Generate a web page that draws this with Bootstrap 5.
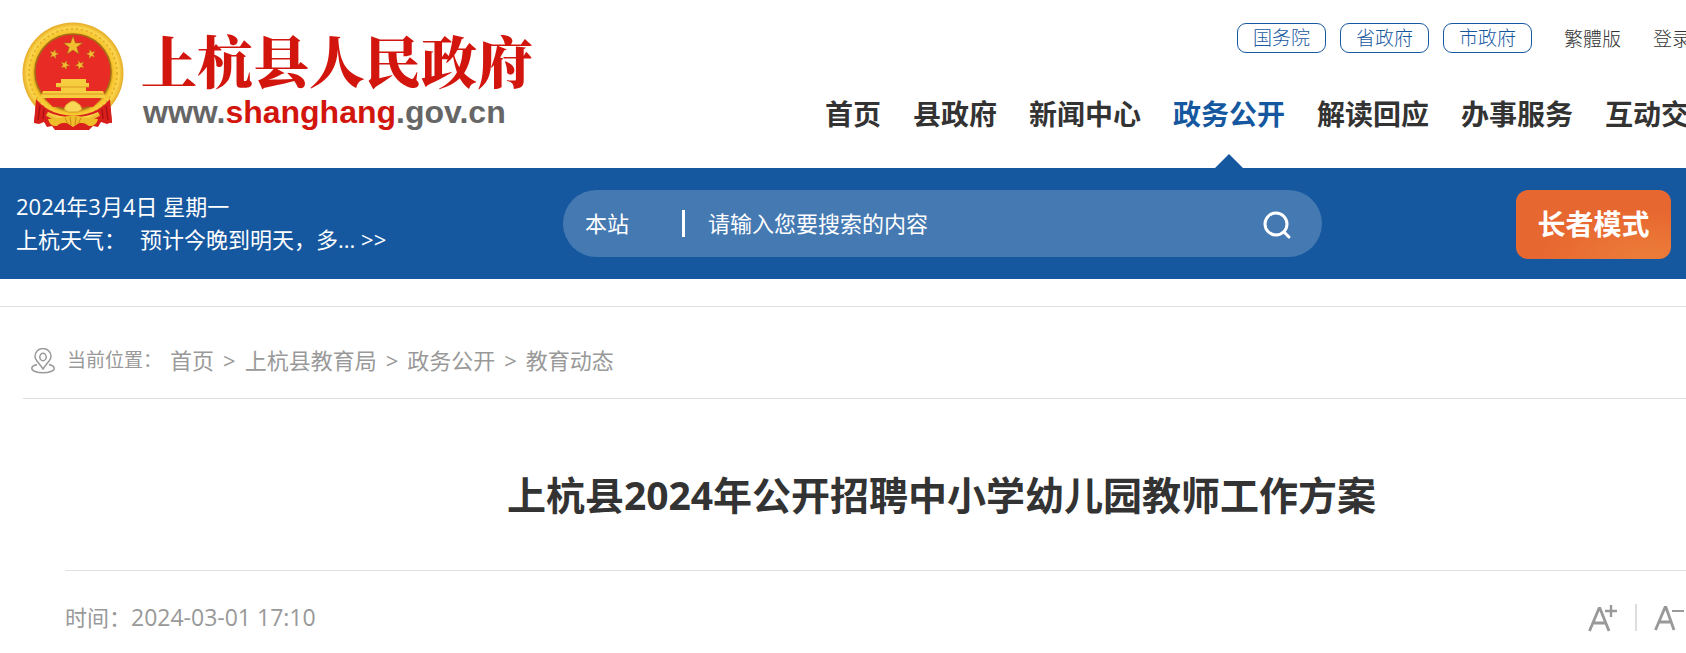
<!DOCTYPE html>
<html lang="zh-CN">
<head>
<meta charset="utf-8">
<meta name="viewport" content="width=device-width, initial-scale=1">
<title>上杭县2024年公开招聘中小学幼儿园教师工作方案</title>
<link href="https://cdn.jsdelivr.net/npm/bootstrap@5.3.0/dist/css/bootstrap.min.css" rel="stylesheet">
<style>
:root { --gov-blue: #16589f; --ink: #333; --muted: #999; --rule: #e0e0e0; }
body { font-family: "Open Sans", "Noto Sans CJK SC", sans-serif; font-size: 22px; line-height: 33px; color: var(--ink); overflow-x: hidden; background: #fff; }
a { text-decoration: none; color: inherit; }
/* the site is laid out a little wider than the window */
.canvas { width: calc(100% + 197px); }

.site-head { height: 168px; padding: 22px 166px 0 22px; }
.emblem { width: 102px; height: 109px; }
.brand-text { margin-left: 17px; }
.brand-name { font-family: "Noto Serif CJK SC", "Noto Sans CJK SC", serif; font-weight: 900; font-size: 56px; line-height: 74px; color: #d2150d; }
.brand-url { font-family: "Liberation Sans", sans-serif; font-weight: 700; font-size: 32px; line-height: 32px; color: #666; padding-left: 2px; }
.brand-url span { color: #d2150d; }

.top-links { font-size: 19px; line-height: 28px; font-weight: 300; padding-right: 26px; gap: 14px; margin-top: 1px; }
.pill { border: 1px solid var(--gov-blue); border-radius: 9px; color: var(--gov-blue); padding: 0 15px; }
.plain-link { margin-left: 18px; padding-top: 1px; }
.main-nav { gap: 32px; font-size: 28px; font-weight: 700; line-height: 42px; margin-top: 40px; }
.main-nav a { position: relative; height: 75px; }
.main-nav .current { color: var(--gov-blue); }
.main-nav .current::after { content: ""; position: absolute; left: 50%; bottom: 0; margin-left: -14px; border: 14px solid transparent; border-top: 0; border-bottom-color: var(--gov-blue); }

.blue-bar { background: var(--gov-blue); color: #fff; }
.bar-grid { display: grid; grid-template-columns: 1fr 759px 1fr; height: 111px; padding: 22px 12px 0 14px; }
.today { padding-left: 2px; }
.weather { gap: 14px; }
.search-box { height: 67px; border-radius: 34px; background: rgba(255,255,255,.2); padding: 0 28px 0 22px; }
.search-box select, .search-box input { background: none; border: 0; color: #fff; outline: 0; appearance: none; padding: 0; }
.search-box select { width: 97px; }
.divider { width: 3px; height: 27px; background: #fff; margin-right: 23px; }
.search-box input::placeholder { color: #fff; opacity: 1; }
.icon-btn { border: 0; background: none; padding: 0; color: inherit; line-height: 0; }
.mode-btn { height: 69px; border: 0; border-radius: 12px; color: #fff; font-size: 28px; font-weight: 700; }
.elder { width: 155px; background: radial-gradient(ellipse 110px 50px at 85% 100%, #ec7d3a, #e76730); padding: 0; }
.access { width: 184px; background: #4669b8; }

.rule { border-bottom: 1px solid var(--rule); }
.bar-gap { height: 28px; }
.crumbs { margin-left: 23px; height: 92px; padding: 16px 0 0 8px; color: var(--muted); border-bottom: 1px solid #dcdcdc; }
.crumb-label { font-size: 19px; margin: 0 8px 0 12px; }
.crumb-list { gap: 9px; }
.article { margin: 0 65px; }
.article h1 { font-size: 39px; line-height: 58px; font-weight: 700; padding: 67px 0 46px; margin: 0; }
.meta { color: var(--muted); padding: 30px 0 0; }
.meta time { font-size: 23px; }
.tools { padding-right: 134px; gap: 17px; }
.tool-bar { width: 2px; height: 27px; background: #ddd; }
</style>
</head>
<body>
<header class="site-head canvas d-flex justify-content-between">
  <a href="#" class="d-flex">
    <svg class="emblem" viewBox="0 0 102 109" role="img" aria-label="国徽">
      <defs>
        <radialGradient id="gold" cx=".5" cy=".5" r=".5"><stop offset=".74" stop-color="#c98a18"/><stop offset=".8" stop-color="#f6c62c"/><stop offset=".91" stop-color="#fbd44c"/><stop offset="1" stop-color="#e5ab25"/></radialGradient>
        <polygon id="star" points="0,-10 2.4,-3.1 9.5,-3.1 3.8,1.3 5.9,8.1 0,4 -5.9,8.1 -3.8,1.3 -9.5,-3.1 -2.4,-3.1"/>
      </defs>
      <path d="M15 74 12 101l5 1 5-2 3 5 5-1 3 4h34l4-4 5 1 3-5 6 2 5-2-3-26z" fill="#d91f1b"/>
      <circle cx="51" cy="51" r="50.500" fill="url(#gold)"/>
      <circle cx="51" cy="51" r="44" fill="none" stroke="#e0a829" stroke-width="1.5" stroke-dasharray="2 3"/>
      <circle cx="51" cy="50" r="38" fill="#e92b25" stroke="#a66b16" stroke-width="1.5"/>
      <g fill="#f3bd32" stroke="#9d6415" stroke-width=".6">
        <use href="#star" transform="translate(51 24)"/>
        <use href="#star" transform="translate(32 32) scale(.5) rotate(15)"/>
        <use href="#star" transform="translate(69 32) scale(.5) rotate(-15)"/>
        <use href="#star" transform="translate(43 43) scale(.5) rotate(20)"/>
        <use href="#star" transform="translate(58 43) scale(.5) rotate(-20)"/>
      </g>
      <path d="M39 57h25v4h3v4h-3v4h17l3 7H18l3-7h18v-4h-5v-4h5z" fill="#f7cd40"/>
      <path d="M36 65h31M20 72h62" stroke="#dc9925"/>
      <path d="M23 77h56l-8 8-10-1-6-4h-8l-6 4-10 1z" fill="#e32822"/>
      <path d="M14 77q10 12 24 15 13 3 26 0 14-3 24-15l2 24-8-1-6-10q-10 5-25 5t-25-5l-6 10-8 1z" fill="#d91f1b"/>
      <path d="M18 84l-2 14M22 87l-1 10M84 84l2 14M80 87l1 10" stroke="#a80f12" stroke-width="1.3"/>
      <path d="M42 87l2-4 4-3 3-1 3 1 4 3 2 4-4 3H46z" fill="#f9d756" stroke="#dba02a"/>
      <path d="M26 97q13-1 20-3l5-1 5 1q7 2 20 3-2 8-9 7-5-4-10-3l-6 4-6-4q-6-1-10 3-7 1-9-7z" fill="#f0bd2a"/>
      <path d="M43 96l3 6M48 95l1 8M54 95l-1 8M59 96l-3 6" stroke="#c98718"/>
    </svg>
    <div class="brand-text">
      <div class="brand-name">上杭县人民政府</div>
      <div class="brand-url">www.<span>shanghang</span>.gov.cn</div>
    </div>
  </a>
  <div class="flex-shrink-0">
    <div class="top-links d-flex justify-content-end align-items-center">
      <a class="pill" href="#">国务院</a>
      <a class="pill" href="#">省政府</a>
      <a class="pill" href="#">市政府</a>
      <a class="plain-link" href="#" lang="zh-TW">繁體版</a>
      <a class="plain-link" href="#">登录</a>
    </div>
    <nav class="main-nav d-flex">
      <a href="#">首页</a>
      <a href="#">县政府</a>
      <a href="#">新闻中心</a>
      <a class="current" href="#" aria-current="page">政务公开</a>
      <a href="#">解读回应</a>
      <a href="#">办事服务</a>
      <a href="#">互动交流</a>
    </nav>
  </div>
</header>

<section class="blue-bar canvas">
  <div class="bar-grid">
    <div class="today">
      <div>2024年3月4日 星期一</div>
      <div class="weather d-flex"><span>上杭天气：</span><a href="#">预计今晚到明天，多... &gt;&gt;</a></div>
    </div>
    <form class="search-box d-flex align-items-center">
      <select aria-label="搜索范围"><option>本站</option></select>
      <span class="divider"></span>
      <input class="flex-grow-1" type="text" placeholder="请输入您要搜索的内容" aria-label="搜索内容">
      <button class="icon-btn" type="button" aria-label="搜索">
        <svg width="32" height="32" viewBox="0 0 32 32" fill="none" stroke="#fff" stroke-width="3" stroke-linecap="round"><circle cx="14" cy="16" r="11"/><path d="M22 24l5 5"/></svg>
      </button>
    </form>
    <div class="d-flex justify-content-end">
      <button class="mode-btn elder me-3" type="button">长者模式</button>
      <button class="mode-btn access" type="button" aria-label="无障碍"></button>
    </div>
  </div>
</section>
<div class="rule bar-gap"></div>

<main class="canvas">
  <nav class="crumbs d-flex align-items-center" aria-label="当前位置">
    <svg width="24" height="26" viewBox="0 0 24 26" fill="none" stroke="#999" stroke-width="1.5"><path d="M12 21C8 15 4 12 4 8.500a8 8 0 0 1 16 0C20 12 16 15 12 21z"/><ellipse cx="12" cy="9" rx="3.200" ry="3.700"/><path d="M6 16.500c-3 .8-5.200 2-5.200 3.700C.8 23 6 24.800 12 24.800S23.200 23 23.200 20.200c0-1.700-2.200-2.900-5.200-3.700"/></svg>
    <span class="crumb-label">当前位置：</span>
    <div class="crumb-list d-flex">
      <a href="#">首页</a><span>&gt;</span>
      <a href="#">上杭县教育局</a><span>&gt;</span>
      <a href="#">政务公开</a><span>&gt;</span>
      <a href="#">教育动态</a>
    </div>
  </nav>
  <article class="article">
    <h1 class="text-center rule">上杭县2024年公开招聘中小学幼儿园教师工作方案</h1>
    <div class="meta d-flex justify-content-between align-items-center">
      <div>时间：<time datetime="2024-03-01T17:10">2024-03-01 17:10</time></div>
      <div class="tools d-flex align-items-center">
        <button class="icon-btn" type="button" aria-label="放大字体"><svg width="30" height="28" viewBox="0 0 30 28" fill="none" stroke="#999" stroke-width="2.800"><path d="M1.500 27 11 4.500h1L21 27M5 19h13"/><path d="M17 7h12M23 1v12" stroke-width="2.400"/></svg></button>
        <span class="tool-bar"></span>
        <button class="icon-btn" type="button" aria-label="缩小字体"><svg width="30" height="28" viewBox="0 0 30 28" fill="none" stroke="#999" stroke-width="2.800"><path d="M1.500 26 11 3.500h1L20 26M5 18h13"/><path d="M18 7h12" stroke-width="2"/></svg></button>
      </div>
    </div>
  </article>
</main>
<script src="https://cdn.jsdelivr.net/npm/bootstrap@5.3.0/dist/js/bootstrap.bundle.min.js"></script>
</body>
</html>
